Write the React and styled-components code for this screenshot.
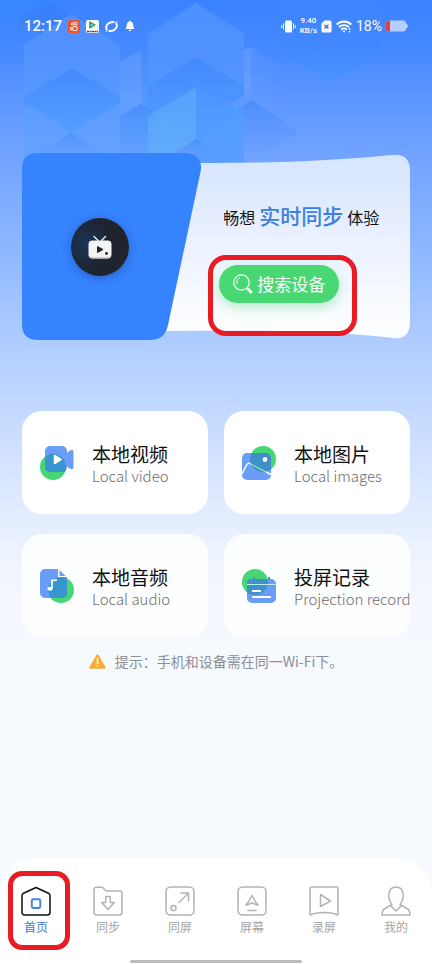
import React from 'react'
import styled, { createGlobalStyle, css } from 'styled-components'

const GlobalStyle = createGlobalStyle`
    * {
        box-sizing: border-box;
    }

    body {
        margin: 0;
        font-family: "Noto Sans CJK SC", "Noto Sans", sans-serif;
        color: #111;
    }

    button {
        font: inherit;
        color: inherit;
        border: 0;
        padding: 0;
        background: none;
        cursor: pointer;
    }
`

const Page = styled.div`
    position: relative;
    min-height: 100vh;
    display: flex;
    flex-direction: column;
    background: linear-gradient(
        #3a83ff 0,
        #4689ff 50px,
        #6099ff 110px,
        #6fa2ff 150px,
        #8fb7ff 250px,
        #b0cdff 345px,
        #c2d8ff 405px,
        #e3edff 515px,
        #f1f6fe 570px,
        #f6f9fe 650px
    );
`

const Backdrop = styled.svg`
    position: absolute;
    top: 0;
    left: 0;
    width: 100%;
    height: 200px;
    opacity: 0.8;
`

const StatusBar = styled.header`
    position: relative;
    display: flex;
    justify-content: space-between;
    align-items: center;
    height: 52px;
    padding: 0 24px;
    color: white;
`

const StatusGroup = styled.div`
    display: flex;
    align-items: center;
    gap: ${props => props.$gap}px;

    svg {
        display: block;
    }
`

const Clock = styled.time`
    font-family: Roboto, sans-serif;
    font-size: 15px;
    font-weight: 500;
    line-height: 20px;
`

const Speed = styled.div`
    font-family: Roboto, sans-serif;
    font-size: 8px;
    font-weight: 500;
    line-height: 10px;
    text-align: center;
`

const Battery = styled.span`
    font-family: Roboto, sans-serif;
    font-size: 14px;
    font-weight: 400;
    line-height: 20px;
`

const Main = styled.main`
    position: relative;
    padding: 101px 22px 0;
`

const Hero = styled.section`
    position: relative;
    display: grid;
    grid-template-columns: 4fr 6fr;
    align-items: center;
    min-height: 187px;
`

const HeroShape = styled.svg`
    position: absolute;
    inset: 0;
    width: 100%;
    height: 100%;
`

const TvBadge = styled.div`
    position: relative;
    justify-self: center;
    display: grid;
    place-items: center;
    width: 58px;
    height: 58px;
    border-radius: 50%;
    background: radial-gradient(circle at 25% 45%, #1b3558 0, #1e232e 50%, #20242b 100%);
    box-shadow: 0 2px 10px rgba(20, 50, 110, 0.4);
`

const HeroContent = styled.div`
    position: relative;
    display: flex;
    flex-direction: column;
    align-items: flex-start;
    gap: 32px;
    padding: 8px 0 0 42px;
`

const Slogan = styled.h1`
    display: flex;
    align-items: baseline;
    gap: 4px;
    margin: 0;
    padding-left: 4px;
    font-size: 16px;
    font-weight: 400;
    line-height: 32px;
    white-space: nowrap;
`

const SloganAccent = styled.em`
    font-size: 21px;
    font-style: normal;
    font-weight: 500;
    color: #3b7fe0;
`

const Anchor = styled.div`
    position: relative;
`

const Mark = styled.span`
    position: absolute;
    inset: ${props => props.$inset};
    border: 5px solid #e91c24;
    border-radius: ${props => props.$radius}px;
    pointer-events: none;
`

const SearchButton = styled.button`
    display: flex;
    align-items: center;
    justify-content: center;
    gap: 4px;
    width: 120px;
    height: 38px;
    border-radius: 19px;
    background: #48d873;
    box-shadow: 0 4px 12px rgba(72, 216, 115, 0.4);
    color: white;
    font-size: 17px;
    line-height: 24px;
    white-space: nowrap;
`

const CardGrid = styled.section`
    display: grid;
    grid-template-columns: repeat(2, minmax(0, 1fr));
    gap: 20px 16px;
    margin-top: 71px;
`

const CardButton = styled.button`
    display: flex;
    align-items: center;
    gap: 18px;
    min-height: 103px;
    padding: 0 0 0 18px;
    border-radius: 20px;
    background: ${props => props.$soft ? 'rgba(255, 255, 255, 0.85)' : 'white'};
    text-align: left;
    white-space: nowrap;

    svg {
        flex: none;
    }
`

const CardTitle = styled.span`
    display: block;
    padding-top: 2px;
    font-size: 19px;
    line-height: 24px;
`

const CardText = styled.span`
    display: block;
    font-size: 15px;
    font-weight: 300;
    line-height: 20px;
    color: #6c6c6c;
`

const Hint = styled.p`
    display: flex;
    align-items: center;
    justify-content: center;
    gap: 9px;
    margin: 14px 0 24px;
    font-size: 14px;
    line-height: 20px;
    color: #8c8f94;
`

const TabBar = styled.nav`
    position: relative;
    margin-top: auto;
    border-radius: 36px 36px 0 0;
    background: white;
`

const TabList = styled.div`
    display: grid;
    grid-template-columns: repeat(6, 1fr);
    padding-top: 28px;
`

const TabButton = styled.button`
    position: relative;
    display: flex;
    flex-direction: column;
    align-items: center;
    gap: 2px;
    color: #a5a5a5;
    font-size: 12px;
    line-height: 18px;

    ${props => props.$active && css`
        color: #3b7bd0;
    `}
`

const HomeIndicator = styled.div`
    width: 40%;
    height: 3px;
    margin: 24px auto 1px;
    border-radius: 2px;
    background: #bdbdbd;
`

const BackdropArt = () => (
    <Backdrop viewBox="0 0 432 200" preserveAspectRatio="xMinYMin slice" aria-hidden="true">
        <defs>
            <linearGradient id="lightDown" x1="0" y1="0" x2="0" y2="1">
                <stop offset="0" stopColor="#75a9ff" stopOpacity="0.4" />
                <stop offset="0.5" stopColor="#5c9bff" stopOpacity="0.5" />
                <stop offset="1" stopColor="#4a9bff" stopOpacity="0.5" />
            </linearGradient>
            <linearGradient id="darkDown" x1="0" y1="0" x2="0" y2="1">
                <stop offset="0" stopColor="#3a82fb" stopOpacity="0.65" />
                <stop offset="0.6" stopColor="#4291ff" stopOpacity="0.5" />
                <stop offset="1" stopColor="#4aa2ff" stopOpacity="0.6" />
            </linearGradient>
            <linearGradient id="darkFade" x1="0" y1="0" x2="0" y2="1">
                <stop offset="0" stopColor="#3a82f8" stopOpacity="0.6" />
                <stop offset="1" stopColor="#5c9bff" stopOpacity="0" />
            </linearGradient>
            <linearGradient id="cyanDown" x1="0" y1="0" x2="0" y2="1">
                <stop offset="0" stopColor="#4a8dff" stopOpacity="0.3" />
                <stop offset="0.5" stopColor="#3c88ff" stopOpacity="0.5" />
                <stop offset="1" stopColor="#3f98ff" stopOpacity="0.9" />
            </linearGradient>
            <linearGradient id="fadeDown" x1="0" y1="0" x2="0" y2="1">
                <stop offset="0" stopColor="#449aff" stopOpacity="0" />
                <stop offset="0.5" stopColor="#4b9dff" stopOpacity="0.55" />
                <stop offset="1" stopColor="#5aa0ff" stopOpacity="0.7" />
            </linearGradient>
            <linearGradient id="sideFade" x1="0" y1="0" x2="1" y2="0">
                <stop offset="0" stopColor="#7fb0ff" stopOpacity="0.35" />
                <stop offset="1" stopColor="#6ba2ff" stopOpacity="0" />
            </linearGradient>
        </defs>
        <path d="M0 0H47L20 18 0 32z" fill="#2f90ff" opacity="0.35" />
        <path d="M47 0 76 20 71 14 40 34 18 20z" fill="#3478f2" opacity="0.4" />
        <path d="M24 45H244V170H24z" fill="url(#fadeDown)" />
        <path d="M71 14 120 45V104L71 134 24 104V45z" fill="url(#lightDown)" />
        <path d="M72 68 120 97V104L72 134 24 104V97z" fill="url(#darkDown)" />
        <path d="M24 110 31 105 71 130 120 103V160H24z" fill="#6ea6ff" opacity="0.35" />
        <path d="M71 133 115 160H27z" fill="url(#darkFade)" />
        <path d="M120 62 141 50V103L120 115z" fill="#6fa6ff" opacity="0.5" />
        <path d="M120 117 141 104 162 117 148 125V160H120z" fill="url(#darkFade)" />
        <path d="M196 3 244 34V90L196 120 148 90V34z" fill="url(#lightDown)" />
        <path d="M196 57 244 86V110L196 140 148 110V86z" fill="url(#darkDown)" />
        <path d="M148 116 196 87V140L162 160H148z" fill="#5cb0fb" opacity="0.7" />
        <path d="M196 87 244 116V170H196z" fill="#4b9dff" opacity="0.55" />
        <path d="M196 139 232 162H160z" fill="url(#darkFade)" />
        <path d="M244 50 251 47V90L244 94z" fill="#82b1ff" opacity="0.45" />
        <path d="M251 47 299 77V132L251 100 236 110 230 105 251 90z" fill="url(#sideFade)" />
        <path d="M251 100 299 132 244 166V105z" fill="url(#darkFade)" />
        <path d="M281 0H379V52L330 82 281 52z" fill="url(#cyanDown)" opacity="0.75" />
    </Backdrop>
)

const StatusIcons = () => (
    <StatusGroup $gap={6}>
        <Clock>12:17</Clock>
        <svg width="12" height="13" viewBox="0 0 12 13">
            <rect width="12" height="13" rx="2" fill="#f0532a" />
            <g fill="none" stroke="white" strokeWidth="1">
                <circle cx="4.6" cy="4" r="1.2" />
                <circle cx="7.6" cy="3.7" r="1.5" />
                <rect x="4.6" y="6.7" width="4.6" height="3.8" rx="1" />
                <path d="M4.5 8 2.8 7v3l1.7-.8" />
            </g>
        </svg>
        <svg width="13" height="13" viewBox="0 0 13 13">
            <rect width="13" height="13" rx="2" fill="white" />
            <path d="M3 1.500v7l3-1V3z" fill="#27a5ee" />
            <path d="M3.500 1.200 10 4.800 4 8.800V6.500L7 5 3.500 3.500z" fill="#2fa84f" />
            <path d="M5 4v2.500L7.200 5z" fill="#f5c21b" />
            <path d="M1 11.500h11" stroke="#444" strokeWidth="1.600" strokeDasharray="2 .5" />
        </svg>
        <svg width="13" height="13" viewBox="0 0 13 13" fill="none" stroke="white">
            <path d="M2 10C-.5 6 3.500 1.200 9.500 2.100" strokeWidth="1.900" />
            <path d="M11 3C13.500 7 9.500 11.800 3.500 10.900" strokeWidth="1.900" />
            <path d="M.9 12C1.500 10.500 2 10.300 2.500 10M12.100 1C11.500 2.500 11 2.700 10.500 3" strokeWidth="1" />
        </svg>
        <svg width="12" height="12" viewBox="0 0 12 12" fill="white">
            <path d="M6 .8c.7 0 .9.400.9 1C8.700 2.300 9.300 3.800 9.300 5.500c0 2 .6 2.700 1.300 3.500H1.400c.7-.8 1.300-1.500 1.300-3.500 0-1.700.6-3.200 2.400-3.700 0-.6.2-1 .9-1zM4.700 9.700h2.600c0 1.700-2.600 1.700-2.600 0z" />
        </svg>
    </StatusGroup>
)

const SystemIcons = () => (
    <StatusGroup $gap={4}>
        <svg width="15" height="13" viewBox="0 0 15 13">
            <rect x="4" y="0.500" width="7" height="12" rx="1.500" fill="white" />
            <path d="M2.500 3.500v6M.7 5v3M12.500 3.500v6M14.300 5v3" stroke="white" strokeWidth="1" />
        </svg>
        <Speed>9.40<br />KB/s</Speed>
        <svg width="11" height="13" viewBox="0 0 11 13">
            <path d="M3.500.5H9A1.500 1.500 0 0 1 10.500 2v9A1.500 1.500 0 0 1 9 12.500H2A1.500 1.500 0 0 1 .5 11V3.500z" fill="white" />
            <path d="m3.500 4.700 4 3.800m0-3.800-4 3.800" stroke="#3a6fc0" strokeWidth="1.300" />
        </svg>
        <svg width="16" height="13" viewBox="0 0 16 13" fill="none" stroke="white" strokeWidth="1.800">
            <path d="M.8 4.500c4-4 10.400-4 14.400 0M3 7.200c2.900-2.800 7.100-2.800 10 0M5.200 9.600c1.500-1.500 4-1.500 5.600 0" />
            <path d="m8 12.600-1.700-1.800h3.400z" fill="white" stroke="none" />
            <path d="M13.500 8v2M13.500 11v1.500" strokeWidth="1.400" />
        </svg>
        <Battery>18%</Battery>
        <svg width="22" height="12" viewBox="0 0 22 12">
            <rect x="0" y="0.500" width="20" height="11" rx="3" fill="#b3ceff" />
            <path d="M20 3.500c2 .5 2 4.500 0 5z" fill="#d3e2ff" />
            <path d="M3 .5h1v11H3a3 3 0 0 1-3-3v-5a3 3 0 0 1 3-3z" fill="#ee3b3b" />
        </svg>
    </StatusGroup>
)

const HeroPanel = () => (
    <HeroShape viewBox="0 0 388 187" preserveAspectRatio="none" aria-hidden="true">
        <defs>
            <linearGradient id="panel" x1="0" y1="0" x2="0" y2="1">
                <stop offset="0" stopColor="#d6e5ff" />
                <stop offset="0.5" stopColor="#ecf2ff" />
                <stop offset="1" stopColor="#ffffff" />
            </linearGradient>
        </defs>
        <path d="M140 10H178C250 10 310 8 370 2Q388 0 388 18V169Q388 187 371 185C310 178 250 177 140 178z" fill="url(#panel)" />
        <path d="M16 0H163C175 0 181 8 178.500 19L146 172C144 182 138 187 128 187H16Q0 187 0 171V16Q0 0 16 0z" fill="#3683ff" />
    </HeroShape>
)

const TvIcon = () => (
    <svg width="24" height="24" viewBox="0 0 24 24" fill="none" aria-hidden="true">
        <path d="m6 1.500 4 4M17.500 1.500l-4 4" stroke="#e4e4e4" strokeWidth="1.500" strokeLinecap="round" />
        <rect x="0.500" y="5.500" width="23" height="18" rx="4" fill="#f3f3f3" />
        <path d="M1 20c1 3 2 3.500 4 3.500h14c2 0 3-.5 4-3.500-1.500 1.500-2.500 2-4 2H5c-1.500 0-2.500-.5-4-2z" fill="#c8c8c8" />
        <path d="M9.500 11.500v6l5.500-3z" fill="#22252c" stroke="#22252c" strokeLinejoin="round" />
        <circle cx="18.500" cy="18.500" r="1.400" fill="#22252c" />
    </svg>
)

const SearchIcon = () => (
    <svg width="20" height="20" viewBox="0 0 20 20" fill="none" stroke="white" aria-hidden="true">
        <circle cx="8.500" cy="8.500" r="7.700" strokeWidth="1.200" />
        <path d="M4 9.500C3.400 6.500 4.500 4.800 6.500 3.800" strokeWidth="1" strokeLinecap="round" />
        <path d="m13.800 14.200 1.400 1.200" strokeWidth="1.500" />
        <path d="m15.500 15.500 2.300 2.400" strokeWidth="3" strokeLinecap="round" />
    </svg>
)

const VideoIcon = () => (
    <svg width="34" height="34" viewBox="0 0 34 34" aria-hidden="true">
        <circle cx="13" cy="21" r="13" fill="#46d674" />
        <rect x="5" y="0" width="22" height="26" rx="5" fill="#699df7" />
        <path d="M26 9c1-3 4-5 6-5 1 0 1.500.5 1.500 1.500v16c0 1.500-1 2-2.500 1.500-2-.5-4-2-5-4.500z" fill="#699df7" />
        <path d="M5 10.700A13 13 0 0 1 26 21c0 2-.4 3.600-1.200 5H10a5 5 0 0 1-5-5z" fill="#3795cf" />
        <path d="M14.500 9.500v8l6.500-4z" fill="white" stroke="white" strokeWidth="1.600" strokeLinejoin="round" />
    </svg>
)

const ImageIcon = () => (
    <svg width="34" height="34" viewBox="0 0 34 34" aria-hidden="true">
        <circle cx="21" cy="13" r="13" fill="#46d674" />
        <rect x="0" y="7" width="29" height="27" rx="5" fill="#699df7" />
        <path d="M9.500 7H24a5 5 0 0 1 5 5v11.300A13 13 0 0 1 9.500 7z" fill="#408fc9" />
        <path d="M0 28 4.500 19C5.500 17 7 17 8.500 18" fill="none" stroke="white" strokeWidth="1.500" />
        <path d="M8.500 18 29 28.500" fill="none" stroke="#7ff0a0" strokeWidth="1.300" />
        <path d="M24 26 29 28.500" stroke="white" strokeWidth="1.500" />
        <circle cx="23" cy="13.500" r="2.400" fill="white" />
    </svg>
)

const AudioIcon = () => (
    <svg width="34" height="34" viewBox="0 0 34 34" aria-hidden="true">
        <circle cx="21" cy="21" r="13" fill="#46d674" />
        <path d="M5 0H18V8H27V24a5 5 0 0 1-5 5H5a5 5 0 0 1-5-5V5a5 5 0 0 1 5-5z" fill="#699df7" />
        <path d="M19.500 1 25.500 7H19.500z" fill="#699df7" />
        <path d="M27 9.500V24a5 5 0 0 1-5 5H10.800A13 13 0 0 1 27 9.500z" fill="#3795cf" />
        <path d="M12 19.500v-8l5-.3" fill="none" stroke="white" strokeWidth="1.700" />
        <ellipse cx="10" cy="19.700" rx="2.700" ry="2" fill="white" />
    </svg>
)

const RecordIcon = () => (
    <svg width="34" height="34" viewBox="0 0 34 34" aria-hidden="true">
        <circle cx="13" cy="13" r="13" fill="#46d674" />
        <rect x="5" y="10" width="29" height="24" rx="5" fill="#699df7" />
        <path d="M5 14a4 4 0 0 1 4-4h16.600A13 13 0 0 1 14 26Q8 26 5 23z" fill="#3f91cd" />
        <path d="M12 8v3M27 8v3" stroke="#3f91cd" strokeWidth="2" />
        <path d="M5 15.500h29" stroke="#b8eee0" strokeWidth="1" />
        <path d="M10 22h9M10 28h19" stroke="white" strokeWidth="2" />
    </svg>
)

const WarningIcon = () => (
    <svg width="17" height="15" viewBox="0 0 17 15" aria-hidden="true">
        <path d="M8.500 1.500 15.500 13.500h-14z" fill="#f5ad3a" stroke="#f5ad3a" strokeWidth="2.400" strokeLinejoin="round" />
        <path d="M8.500 4v6M8.500 11v1.500" stroke="white" strokeWidth="1.500" />
    </svg>
)

const TabIcon = ({ name }) => (
    <svg width="30" height="30" viewBox="0 0 30 30" fill="none" stroke="#b3b3b3" strokeWidth="1.500" strokeLinejoin="round" strokeLinecap="round" aria-hidden="true">
        {name === 'home' && <>
            <path d="M15 1.500 28 7.500C28.700 8 29 8.500 29 9.500V26.500a2.500 2.500 0 0 1-2.500 2.500h-23A2.500 2.500 0 0 1 1 26.500V9.500C1 8.500 1.300 8 2 7.500z" stroke="#111" />
            <rect x="10.800" y="13.300" width="8.500" height="8.700" rx="1.500" stroke="#3f83e3" strokeWidth="1.900" />
        </>}
        {name === 'sync' && <>
            <path d="M3 1.200H9.500L13 5H27a2 2 0 0 1 2 2V26.500a2.500 2.500 0 0 1-2.500 2.500h-23A2.500 2.500 0 0 1 1 26.500V3.200a2 2 0 0 1 2-2z" />
            <path d="M12.700 10.500h4.600v6h4L15 23.500 8.700 16.500h4z" />
        </>}
        {name === 'mirror' && <>
            <rect x="1" y="1" width="28" height="28" rx="4.500" />
            <circle cx="8.500" cy="22" r="2.600" />
            <path d="M14 16.500 23.500 7M16 7h7.500v8" />
        </>}
        {name === 'screen' && <>
            <rect x="1" y="1" width="28" height="28" rx="4.500" />
            <path d="M15 9.500C16.500 12.500 18.500 16 21 19.300L15 17 9 19.300C11.500 16 13.500 12.500 15 9.500zM11 24.500h8" />
        </>}
        {name === 'record' && <>
            <path d="M3 1H27.500A1.500 1.500 0 0 1 29 2.500V29C22 25.500 8 25.500 1 29V3a2 2 0 0 1 2-2z" />
            <path d="M11.500 8.500v12L21.500 15z" />
        </>}
        {name === 'me' && <>
            <path d="M11 18.500C6.500 13 6 1 15 1s8.500 12 4 17.500L26 22.500c2 1 3 3 3 6.500H1c0-3.500 1-5.500 3-6.500z" />
            <path d="M10 20 15 25 20 20" />
        </>}
    </svg>
)

const cards = [
    { title: '本地视频', text: 'Local video', Icon: VideoIcon },
    { title: '本地图片', text: 'Local images', Icon: ImageIcon },
    { title: '本地音频', text: 'Local audio', Icon: AudioIcon, soft: true },
    { title: '投屏记录', text: 'Projection record', Icon: RecordIcon, soft: true }
]

const tabs = [
    { name: 'home', label: '首页' },
    { name: 'sync', label: '同步' },
    { name: 'mirror', label: '同屏' },
    { name: 'screen', label: '屏幕' },
    { name: 'record', label: '录屏' },
    { name: 'me', label: '我的' }
]

const Card = ({ title, text, Icon, soft }) => (
    <CardButton $soft={soft}>
        <Icon />
        <span>
            <CardTitle>{title}</CardTitle>
            <CardText>{text}</CardText>
        </span>
    </CardButton>
)

const App = () => (
    <Page>
        <GlobalStyle />
        <BackdropArt />
        <StatusBar>
            <StatusIcons />
            <SystemIcons />
        </StatusBar>
        <Main>
            <Hero>
                <HeroPanel />
                <TvBadge><TvIcon /></TvBadge>
                <HeroContent>
                    <Slogan>
                        畅想<SloganAccent>实时同步</SloganAccent>体验
                    </Slogan>
                    <Anchor>
                        <SearchButton><SearchIcon />搜索设备</SearchButton>
                        <Mark $inset="-10px -18px -33px -11px" $radius={18} />
                    </Anchor>
                </HeroContent>
            </Hero>
            <CardGrid>
                {cards.map(card => <Card key={card.text} {...card} />)}
            </CardGrid>
            <Hint><WarningIcon />提示：手机和设备需在同一Wi-Fi下。</Hint>
        </Main>
        <TabBar>
            <TabList>
                {tabs.map((tab, index) => (
                    <TabButton key={tab.name} $active={index === 0}>
                        <TabIcon name={tab.name} />
                        {tab.label}
                        {index === 0 && <Mark $inset="-15px 2px -14px 8px" $radius={14} />}
                    </TabButton>
                ))}
            </TabList>
            <HomeIndicator />
        </TabBar>
    </Page>
)

export default App
